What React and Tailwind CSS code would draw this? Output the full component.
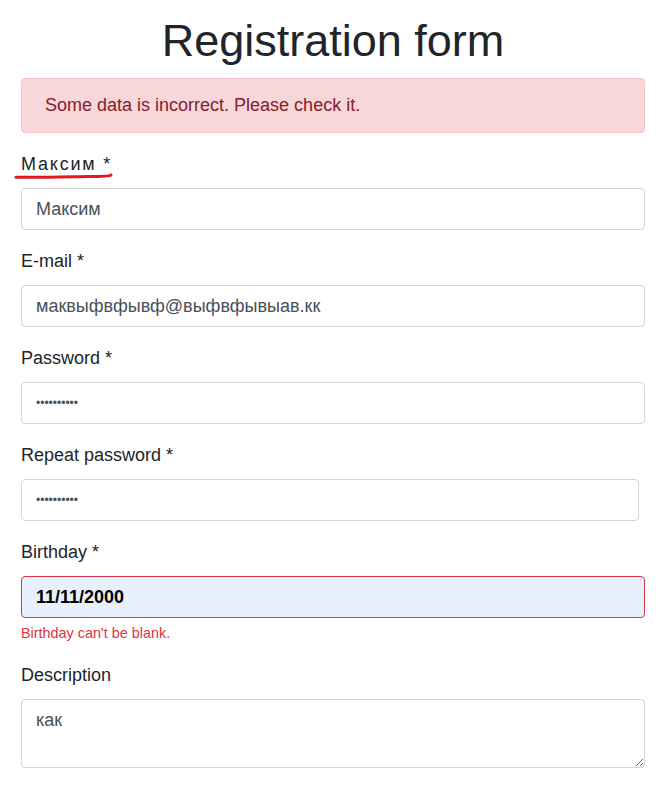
import React from "react";

const inputBase =
  "block w-full h-[42px] rounded-[4px] border border-[#ced4da] bg-white px-[14px] text-[18px] leading-[24px] text-[#495057] outline-none";

function Label({ children, className = "" }) {
  return (
    <label className={"block text-[18px] leading-[27px] text-[#212529] mb-[10px] " + className}>
      {children}
    </label>
  );
}

export default function App() {
  return (
    <div
      className="min-h-[810px] bg-white pl-[21px] pr-[23px]"
      style={{ fontFamily: '"Liberation Sans", Arial, sans-serif' }}
    >
      <h1 className="pt-[15px] mb-[11px] text-center text-[45px] leading-[52px] font-normal text-[#212529]">
        Registration form
      </h1>

      <div className="rounded-[4px] border border-[#f5c2c7] bg-[#f8d7da] pl-[23px] pr-4 pt-[13px] pb-[13px] text-[18px] leading-[27px] text-[#842029]">
        Some data is incorrect. Please check it.
      </div>

      <div className="mt-[18px]">
        <div className="relative inline-block mb-[10px]">
          <label className="block text-[18px] leading-[27px] text-[#212529] tracking-[1.8px]">
            Максим *
          </label>
          <svg
            className="absolute left-[-7px] top-[21px]"
            width="100"
            height="8"
            viewBox="0 0 100 8"
            fill="none"
          >
            <path
              d="M2 5.3 C 25 5.6, 50 5, 75 4.6 S 95 3.6, 97 3"
              stroke="#e3191f"
              strokeWidth="3"
              strokeLinecap="round"
            />
          </svg>
        </div>
        <input className={inputBase} readOnly defaultValue="Максим" />
      </div>

      <div className="mt-[18px]">
        <Label>E-mail *</Label>
        <input className={inputBase} readOnly defaultValue="маквыфвфывф@выфвфывыав.кк" />
      </div>

      <div className="mt-[18px]">
        <Label>Password *</Label>
        <input
          type="password"
          className={inputBase + " !text-[12px]"}
          readOnly
          defaultValue="1234567890"
        />
      </div>

      <div className="mt-[18px]">
        <Label>Repeat password *</Label>
        <input
          type="password"
          className={inputBase + " !w-[618px] !text-[12px]"}
          readOnly
          defaultValue="1234567890"
        />
      </div>

      <div className="mt-[18px]">
        <Label>Birthday *</Label>
        <input
          className="block w-full h-[42px] rounded-[4px] border border-[#dc3545] bg-[#e8f0fe] px-[14px] text-[18px] leading-[24px] font-bold text-black outline-none"
          readOnly
          defaultValue="11/11/2000"
        />
        <div className="mt-[5px] text-[14.4px] leading-[21.6px] text-[#dc3545]">
          Birthday can't be blank.
        </div>
      </div>

      <div className="mt-[17px]">
        <Label>Description</Label>
        <textarea
          className="block w-full h-[69px] rounded-[4px] border border-[#ced4da] bg-white px-[14px] pt-[8px] pb-[6px] text-[18px] leading-[24px] text-[#495057] outline-none resize-y"
          readOnly
          defaultValue="как"
        />
      </div>
    </div>
  );
}
